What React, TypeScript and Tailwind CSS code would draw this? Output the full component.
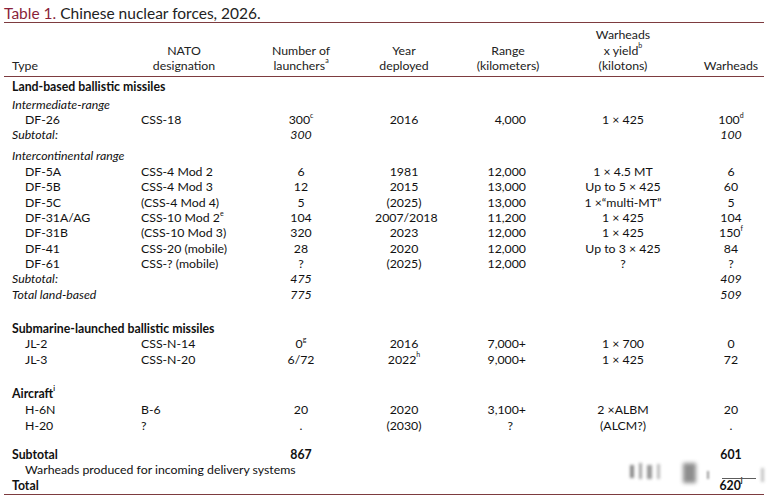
import React from 'react';

type Row = {
  cells: React.ReactNode[];
  indent?: boolean;
  italic?: boolean;
  bold?: boolean;
  mt?: string;
};

const Sup = ({ children }: { children: React.ReactNode }) => (
  <sup className="relative -top-[1.5px] text-[7px] align-super leading-none">{children}</sup>
);

const cols = 'grid grid-cols-[137px_86px_148px_58px_150px_80px_100px]';

const rows: Row[] = [
  { cells: ['Land-based ballistic missiles'], bold: true, mt: 'mt-[2px]' },
  { cells: ['Intermediate-range'], italic: true, mt: 'mt-[3px]' },
  { cells: ['DF-26', 'CSS-18', <>300<Sup>c</Sup></>, '2016', '4,000', '1 × 425', <>100<Sup>d</Sup></>], indent: true },
  { cells: ['Subtotal:', '', '300', '', '', '', '100'], italic: true },
  { cells: ['Intercontinental range'], italic: true, mt: 'mt-[5px]' },
  { cells: ['DF-5A', 'CSS-4 Mod 2', '6', '1981', '12,000', '1 × 4.5 MT', '6'], indent: true, mt: 'mt-[1px]' },
  { cells: ['DF-5B', 'CSS-4 Mod 3', '12', '2015', '13,000', 'Up to 5 × 425', '60'], indent: true },
  { cells: ['DF-5C', '(CSS-4 Mod 4)', '5', '(2025)', '13,000', '1 ×“multi-MT”', '5'], indent: true },
  { cells: ['DF-31A/AG', <>CSS-10 Mod 2<Sup>e</Sup></>, '104', '2007/2018', '11,200', '1 × 425', '104'], indent: true },
  { cells: ['DF-31B', '(CSS-10 Mod 3)', '320', '2023', '12,000', '1 × 425', <>150<Sup>f</Sup></>], indent: true },
  { cells: ['DF-41', 'CSS-20 (mobile)', '28', '2020', '12,000', 'Up to 3 × 425', '84'], indent: true },
  { cells: ['DF-61', 'CSS-? (mobile)', '?', '(2025)', '12,000', '?', '?'], indent: true },
  { cells: ['Subtotal:', '', '475', '', '', '', '409'], italic: true },
  { cells: ['Total land-based', '', '775', '', '', '', '509'], italic: true },
  { cells: ['Submarine-launched ballistic missiles'], bold: true, mt: 'mt-[19px]' },
  { cells: ['JL-2', 'CSS-N-14', <>0<Sup>g</Sup></>, '2016', '7,000+', '1 × 700', '0'], indent: true },
  { cells: ['JL-3', 'CSS-N-20', '6/72', <>2022<Sup>h</Sup></>, '9,000+', '1 × 425', '72'], indent: true },
  { cells: [<>Aircraft<Sup>i</Sup></>], bold: true, mt: 'mt-[19px]' },
  { cells: ['H-6N', 'B-6', '20', '2020', '3,100+', '2 ×ALBM', '20'], indent: true, mt: 'mt-[1px]' },
  { cells: ['H-20', '?', '.', '(2030)', '?', '(ALCM?)', '.'], indent: true },
  { cells: ['Subtotal', '', '867', '', '', '', '601'], bold: true, mt: 'mt-[14px]' },
  { cells: ['Warheads produced for incoming delivery systems'], indent: true },
  { cells: ['Total', '', '', '', '', '', <>620<Sup>j</Sup></>], bold: true },
];

const cellClass = [
  '',
  'text-left',
  'text-center',
  'text-center',
  'text-right pr-[57px]',
  'text-center',
  'text-center pl-[36px]',
];

function DataRow({ row }: { row: Row }) {
  const style = `${row.italic ? 'italic' : ''} ${row.bold ? 'font-bold' : ''}`;
  if (row.cells.length === 1) {
    return (
      <div className={`h-[15.33px] leading-[15.33px] whitespace-nowrap ${row.indent ? 'pl-[21px]' : 'pl-[8px]'} ${style} ${row.mt ?? ''}`}>
        {row.cells[0]}
      </div>
    );
  }
  return (
    <div className={`${cols} h-[15.33px] leading-[15.33px] whitespace-nowrap ${style} ${row.mt ?? ''}`}>
      {row.cells.map((c, i) => (
        <div
          key={i}
          className={`${i === 0 ? (row.indent ? 'pl-[21px]' : 'pl-[8px]') : cellClass[i]} ${c === '?' && i === 4 ? 'pr-[70px]' : ''}`}
        >
          {c}
        </div>
      ))}
    </div>
  );
}

// smeared watermark that sits on top of the last rows
function Watermark() {
  return (
    <div className="absolute left-[630px] top-[461px] h-[22px] flex items-end gap-[5px] pointer-events-none">
      <div className="w-[4px] h-[13px] mb-[5px] bg-[#555] blur-[1.5px] opacity-70" />
      <div className="w-[3px] h-[16px] mb-[4px] bg-[#666] blur-[1.5px] opacity-60" />
      <div className="w-[5px] h-[14px] mb-[4px] bg-[#555] blur-[1.5px] opacity-60" />
      <div className="w-[3px] h-[15px] mb-[4px] bg-[#777] blur-[1.5px] opacity-50 mr-[18px]" />
      <div className="w-[13px] h-[20px] bg-[#444] blur-[2px] opacity-60 mr-[6px]" />
      <div className="w-[2px] h-[8px] mb-[4px] bg-[#555] blur-[1px] opacity-60 mr-[8px]" />
      <div className="w-[34px] h-[1.5px] mb-[4px] bg-[#333] opacity-80" />
      <div className="w-[3px] h-[14px] mb-[1px] bg-[#888] blur-[1.5px] opacity-50" />
    </div>
  );
}

export default function App() {
  return (
    <div className="w-[768px] h-[498px] bg-white text-[#111] text-[12.3px] overflow-hidden relative" style={{ fontFamily: 'Lato, "Open Sans", sans-serif' }}>
      <div className="mx-[4px]">
        <div className="h-[23px] pt-[3px] leading-[20px] text-[15.5px] text-[#222] border-b-[1.5px] border-[#7d3b3f]">
          <span className="text-[#8a1f3a]">Table 1.</span> Chinese nuclear forces, 2026.
        </div>

        {/* column headings */}
        <div className={`${cols} items-end pt-[4px] pb-[2px] leading-[15.5px] text-[#222] border-b-[1.5px] border-[#7d3b3f]`}>
          <div className="pl-[8px]">Type</div>
          <div className="text-center">NATO<br />designation</div>
          <div className="text-center">Number of<br />launchers<Sup>a</Sup></div>
          <div className="text-center">Year<br />deployed</div>
          <div className="text-center">Range<br />(kilometers)</div>
          <div className="text-center">Warheads<br />x yield<Sup>b</Sup><br />(kilotons)</div>
          <div className="text-center pl-[36px]">Warheads</div>
        </div>

        {rows.map((r, i) => (
          <DataRow key={i} row={r} />
        ))}

        <div className="mt-[1px] border-b-[1.5px] border-[#7d3b3f]" />
      </div>

      <Watermark />
    </div>
  );
}
